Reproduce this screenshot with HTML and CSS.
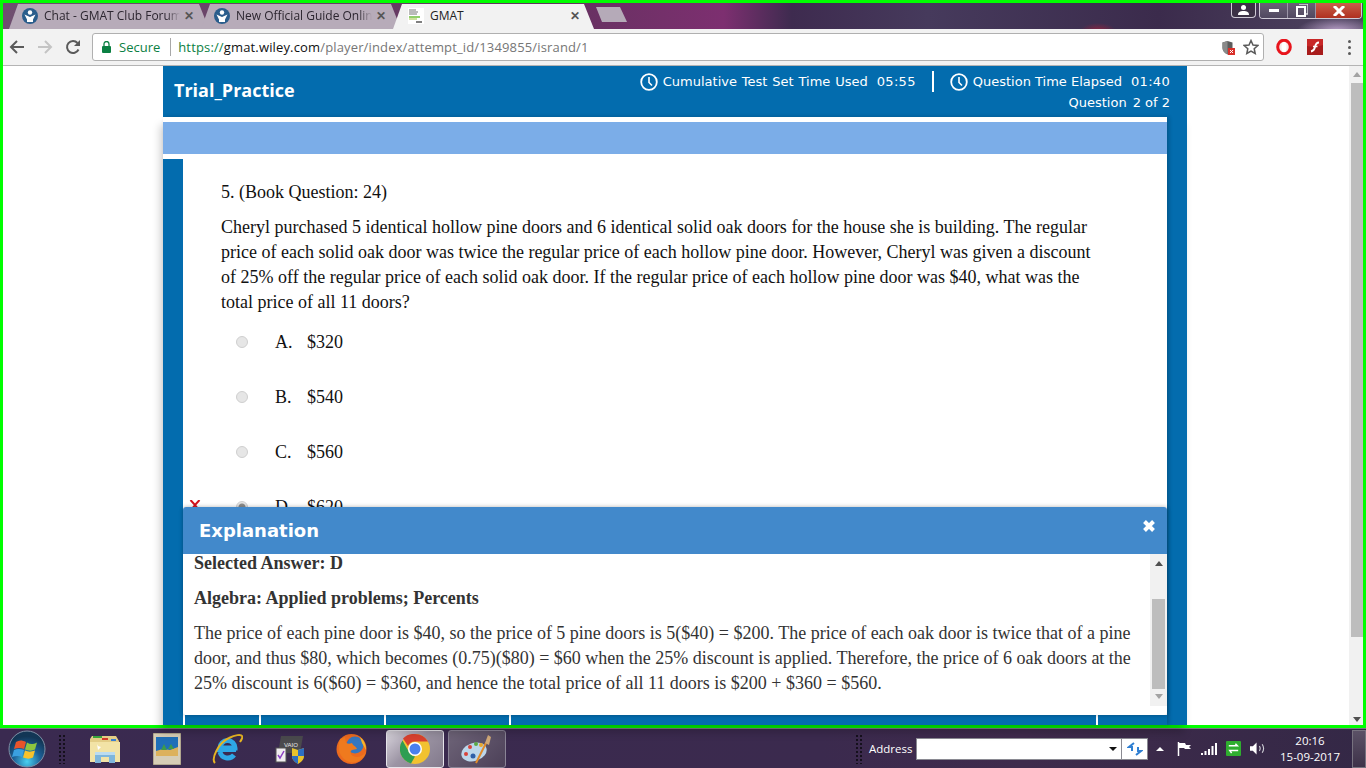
FILE: index.html
```html
<!DOCTYPE html>
<html lang="en">
<head>
  <meta charset="UTF-8">
  <title>GMAT</title>
  <link rel="stylesheet" href="styles.css">
</head>
<body>

  <div class="screen">

    <!-- Tabs -->
    <div class="tabstrip">
      <div class="tab">
        <svg class="fav" viewBox="0 0 16 16"><circle cx="8" cy="8" r="8" fill="#2a5d8c"/><circle cx="8" cy="4.500" r="2.200" fill="#fff"/><path d="M2.500 6.500L8 9l5.500-2.500L11 11.500V14H5v-2.500z" fill="#fff"/></svg>
        <span class="tab-title">Chat - GMAT Club Forum</span>
        <span class="tab-close">✕</span>
      </div>
      <div class="tab">
        <svg class="fav" viewBox="0 0 16 16"><circle cx="8" cy="8" r="8" fill="#2a5d8c"/><circle cx="8" cy="4.500" r="2.200" fill="#fff"/><path d="M2.500 6.500L8 9l5.500-2.500L11 11.500V14H5v-2.500z" fill="#fff"/></svg>
        <span class="tab-title">New Official Guide Online</span>
        <span class="tab-close">✕</span>
      </div>
      <div class="tab tab-active">
        <svg class="fav" viewBox="0 0 16 16"><rect width="16" height="16" fill="#fff"/><path d="M1 2h7M1 4h9M1 6h8" stroke="#777" stroke-width="1"/><path d="M1 9h11" stroke="#6cbf3a" stroke-width="1.500"/><path d="M1 11h8" stroke="#9ac23c"/><path d="M8 14h6" stroke="#555" stroke-width="1.500"/></svg>
        <span class="tab-title">GMAT</span>
        <span class="tab-close">✕</span>
      </div>
      <div class="newtab"></div>
      <div class="winbtns">
        <div class="winbtn win-user"><svg width="11" height="10" viewBox="0 0 11 10"><circle cx="5.500" cy="2.500" r="2.500" fill="#fff"/><path d="M0 10c0-3 2-4 5.500-4s5.500 1 5.500 4z" fill="#fff"/></svg></div>
        <div class="wingroup">
          <div class="winbtn win-min"><span class="min-bar"></span></div>
          <div class="winbtn win-max"><svg width="12" height="13" viewBox="0 0 12 13"><path d="M3 0h9v10H9" fill="none" stroke="#dcdce0" stroke-width="1.500"/><rect x="1" y="3" width="8" height="9" fill="none" stroke="#fff" stroke-width="2"/></svg></div>
          <div class="winbtn win-close"><svg width="14" height="10" viewBox="0 0 14 10"><path d="M2 0l10 10M12 0L2 10" stroke="#fff" stroke-width="3"/></svg></div>
        </div>
      </div>
    </div>

    <!-- Toolbar -->
    <div class="toolbar">
      <svg class="nav-icon nav-back" viewBox="0 0 16 16"><path d="M15 8H2M8 2L2 8l6 6" fill="none" stroke="#5a5a5a" stroke-width="2"/></svg>
      <svg class="nav-icon nav-fwd" viewBox="0 0 16 16"><path d="M1 8h13M8 2l6 6-6 6" fill="none" stroke="#c4c4c4" stroke-width="2"/></svg>
      <svg class="nav-icon nav-reload" viewBox="0 0 16 16"><path d="M13.500 10.500A6 6 0 1 1 12.500 4" fill="none" stroke="#5a5a5a" stroke-width="2"/><path d="M15 1v6H9z" fill="#5a5a5a"/></svg>
      <div class="omnibox">
        <svg class="lock" width="9" height="12" viewBox="0 0 9 12"><rect y="5" width="9" height="7" rx="1" fill="#0b8043"/><path d="M2 5.500V3a2.500 2.500 0 0 1 5 0v2.500" fill="none" stroke="#0b8043" stroke-width="1.300"/></svg>
        <span class="secure">Secure</span>
        <span class="omni-sep"></span>
        <span class="url"><span class="url-https">https://</span><span class="url-host">gmat.wiley.com</span>/player/index/attempt_id/1349855/isrand/1</span>
        <svg class="omni-shield" width="13" height="15" viewBox="0 0 13 15"><path d="M5.500 1l5 1.500V8c0 3-2 5-5 6.500C2.500 13 .5 11 .5 8V2.500z" fill="#5c5c5c"/><path d="M5.500 1v13.500C2.500 13 .5 11 .5 8V2.500z" fill="#8a8a8a"/><rect x="6" y="8" width="7" height="7" fill="#d9302a"/><path d="M8 10l3 3M11 10l-3 3" stroke="#fff"/></svg>
        <svg class="omni-star" width="16" height="16" viewBox="0 0 16 16"><path d="M8 1.500l2 4.500 4.800.5-3.600 3.200 1 4.800L8 12l-4.200 2.500 1-4.800L1.200 6.500 6 6z" fill="none" stroke="#5a5a5a" stroke-width="1.500"/></svg>
      </div>
      <svg class="ext ext-opera" width="16" height="16" viewBox="0 0 16 16"><ellipse cx="8" cy="8" rx="6.300" ry="6.800" fill="#f4e8e8" stroke="#e8141c" stroke-width="3"/><ellipse cx="8" cy="8" rx="2.500" ry="5" fill="#fff"/></svg>
      <svg class="ext ext-flash" width="16" height="16" viewBox="0 0 16 16"><rect width="16" height="16" fill="#a81c1c"/><path d="M0 0h16v6C10 8 5 8 0 7z" fill="#c82828"/><path d="M12 3.500C9 3.500 8.500 5.500 8 8s-1.500 4-4 4.500" fill="none" stroke="#fff" stroke-width="1.800"/><path d="M6 7.500h4.500" stroke="#fff" stroke-width="1.500"/></svg>
      <div class="chrome-menu"><i></i><i></i><i></i></div>
    </div>

    <!-- Page -->
    <div class="viewport">
      <div class="player">
        <header class="player-head">
          <div class="test-name">Trial_Practice</div>
          <div class="timers">
            <div class="timer-row">
              <svg class="clock" viewBox="0 0 18 18"><circle cx="9" cy="9" r="7.800" fill="none" stroke="#fff" stroke-width="1.800"/><path d="M9 4v5.500l3 3" fill="none" stroke="#fff" stroke-width="1.600"/></svg>
              <span class="timer-label timer-label-wide">Cumulative Test Set Time Used</span>
              <span class="timer-value">05:55</span>
              <span class="timer-sep"></span>
              <svg class="clock" viewBox="0 0 18 18"><circle cx="9" cy="9" r="7.800" fill="none" stroke="#fff" stroke-width="1.800"/><path d="M9 4v5.500l3 3" fill="none" stroke="#fff" stroke-width="1.600"/></svg>
              <span class="timer-label">Question Time Elapsed</span>
              <span class="timer-value">01:40</span>
            </div>
            <div class="question-count"><span>Question</span><span>2 of 2</span></div>
          </div>
        </header>

        <div class="player-main">
          <div class="player-sheet">
            <div class="toolbar-band"></div>
            <div class="question-wrap">
              <div class="question">
                <p class="q-text">5. (Book Question: 24)</p>
                <p class="q-text">Cheryl purchased 5 identical hollow pine doors and 6 identical solid oak doors for the house she is building. The regular price of each solid oak door was twice the regular price of each hollow pine door. However, Cheryl was given a discount of 25% off the regular price of each solid oak door. If the regular price of each hollow pine door was $40, what was the total price of all 11 doors?</p>
                <div class="option"><span class="mark"></span><span class="radio"></span><span class="opt-letter">A.</span><span>$320</span></div>
                <div class="option"><span class="mark"></span><span class="radio"></span><span class="opt-letter">B.</span><span>$540</span></div>
                <div class="option"><span class="mark"></span><span class="radio"></span><span class="opt-letter">C.</span><span>$560</span></div>
                <div class="option"><span class="mark"><svg width="12" height="10" viewBox="0 0 12 10"><path d="M1.500 0l4.500 5 4.500-5M6 5L2 10M6 5l4 5" fill="none" stroke="#d3121c" stroke-width="2"/></svg></span><span class="radio radio-on"></span><span class="opt-letter">D.</span><span>$620</span></div>
              </div>
              <div class="footer-tabs"><span class="ft ft1"></span><span class="ft ft2"></span><span class="ft ft3"></span><span class="ft ft4"></span><span class="ft ft5"></span></div>
            </div>
          </div>
        </div>

        <!-- Explanation popup -->
        <section class="modal">
          <div class="modal-head">
            <h2>Explanation</h2>
            <svg width="14" height="14" viewBox="0 0 14 14"><path d="M2.500 2.500l9 9M11.500 2.500l-9 9" stroke="#fff" stroke-width="4"/></svg>
          </div>
          <div class="modal-body">
            <div class="modal-text">
              <p><b>Selected Answer: D</b></p>
              <p><b>Algebra: Applied problems; Percents</b></p>
              <p>The price of each pine door is $40, so the price of 5 pine doors is 5($40) = $200. The price of each oak door is twice that of a pine door, and thus $80, which becomes (0.75)($80) = $60 when the 25% discount is applied. Therefore, the price of 6 oak doors at the 25% discount is 6($60) = $360, and hence the total price of all 11 doors is $200 + $360 = $560.</p>
            </div>
            <div class="modal-scroll">
              <span class="arrow-up"></span>
              <span class="modal-thumb"></span>
              <span class="arrow-down arrow-light"></span>
            </div>
          </div>
        </section>
      </div>

      <div class="page-scroll">
        <span class="arrow-up arrow-light"></span>
        <span class="page-thumb"></span>
        <span class="arrow-down"></span>
      </div>
    </div>
  </div>

  <!-- Windows taskbar -->
  <div class="taskbar">
    <svg class="orb" width="38" height="38" viewBox="0 0 38 38">
      <defs><radialGradient id="orbFill" cx="50%" cy="85%" r="70%"><stop offset="0" stop-color="#4ad0f0"/><stop offset=".55" stop-color="#1c5f96"/><stop offset="1" stop-color="#123655"/></radialGradient></defs>
      <circle cx="19" cy="19" r="18" fill="url(#orbFill)" stroke="#7f8fa5"/>
      <path d="M8 12c3-2 6-2 10 0l-2 7c-3-1.500-6-1.500-10 0z" fill="#e8542a"/>
      <path d="M19 12.500c3 2 6 2 10 0l-2 7c-3 1.500-6 1.500-10 0z" fill="#8ec63f"/>
      <path d="M6 20c3-1.500 6-1.500 10 0l-2 7c-3-1.500-6-1.500-10 0z" fill="#3aa0e0"/>
      <path d="M17 20.500c3 1.500 6 1.500 10 0l-2 7c-3 1.500-6 1.500-10 0z" fill="#f8c22c"/>
    </svg>
    <span class="grip"></span>
    <div class="task-icons">
      <svg width="32" height="30" viewBox="0 0 32 30"><path d="M1 5l2-3h24l3 5v21H1z" fill="#e3cd86"/><path d="M4 2h9v2H4z" fill="#3aa53a"/><path d="M13 4h6v2h-6z" fill="#d23a2a"/><path d="M22 5h5v2h-5z" fill="#3a7fd2"/><path d="M1 8h30v20H1z" fill="#f2e3a6"/><path d="M6 29V18h20v11h-6v-6h-8v6z" fill="#7fb6dc"/><path d="M6 18h20v3H6z" fill="#bcdcf0"/><path d="M8 10l1 6 3-3-3-1z" fill="#fff"/></svg>
      <svg width="28" height="32" viewBox="0 0 28 32"><rect width="28" height="32" fill="#d6cdb6" stroke="#8d8168"/><rect x="3" y="4" width="22" height="19" fill="#1f6fb8"/><path d="M3 18l7-2 7 1 8-3v9H3z" fill="#dcb15c"/><path d="M8 17l3-6 3 6zM15 16l3-5 3 5z" fill="#3f9a4a"/></svg>
      <svg width="31" height="32" viewBox="0 0 31 32"><path d="M8 15a7.500 7.500 0 0 1 15 0H8zM8 19a8 8 0 0 0 14 3" fill="none" stroke="#2ea8e6" stroke-width="5"/><path d="M5 17h19" stroke="#2ea8e6" stroke-width="4"/><path d="M3 30C-1 26 6 10 17 5c6-3 12-4 13-2 1 1 0 3-2 6" fill="none" stroke="#e6b422" stroke-width="2"/></svg>
      <svg width="30" height="32" viewBox="0 0 30 32"><path d="M6 3h22l-3 17H3z" fill="#4a4a4d"/><text x="9" y="14" class="vaio-mark">VAIO</text><rect x="1" y="15" width="10" height="14" fill="#f0edf0" stroke="#555"/><path d="M3 22l2 3 4-7" fill="none" stroke="#8a3fc2" stroke-width="1.500"/><path d="M17 15l6 2 6-2v8c0 4-3 6-6 8-3-2-6-4-6-8z" fill="#e8c22c"/><path d="M23 17v6h6v-8zM17 23h6v8c-3-2-6-4-6-8z" fill="#2c6fc2"/></svg>
      <svg width="31" height="32" viewBox="0 0 31 32"><circle cx="15.500" cy="16" r="15" fill="#ec6a1e"/><circle cx="19" cy="12" r="8.500" fill="#3577c0"/><path d="M4 6c-3 9-1 19 9 23 8 2 15-3 17-10-4 5-9 6-13 4-3-2-3-5-1-6l5-1c-1-3-4-3-5-6-2 1-4 1-6 0L9 4z" fill="#ef7a1e"/><path d="M24 4c4 3 6 8 6 13l-4-7z" fill="#f7b52a"/></svg>
    </div>
    <div class="task-btn task-chrome">
      <svg width="30" height="30" viewBox="0 0 30 30"><circle cx="15" cy="15" r="15" fill="#f2c230"/><path d="M15 0a15 15 0 0 1 13 7.500H15A7.500 7.500 0 0 0 8 12L3 4.500A15 15 0 0 1 15 0z" fill="#d9412f"/><path d="M2.500 6.500L9 18a7.500 7.500 0 0 0 6 4.500L11 29.500A15 15 0 0 1 2.500 6.500z" fill="#2f9e52"/><circle cx="15" cy="15" r="7" fill="#fff"/><circle cx="15" cy="15" r="5.500" fill="#4a80ee"/></svg>
    </div>
    <div class="task-btn task-paint">
      <svg width="32" height="32" viewBox="0 0 32 32"><ellipse cx="13" cy="19" rx="13" ry="9" fill="#bcd6ea" transform="rotate(-18 13 19)"/><circle cx="5" cy="21" r="2" fill="#d8433a"/><circle cx="9" cy="14" r="2" fill="#d8433a"/><circle cx="15" cy="11" r="2" fill="#5aa845"/><circle cx="20" cy="12" r="2" fill="#e8a62c"/><circle cx="12" cy="23" r="2.500" fill="#2f5fa8"/><path d="M15 30L25 10" stroke="#e08a2a" stroke-width="2"/><path d="M24 10l3-8 3 2-2 8z" fill="#d0a878"/></svg>
    </div>
    <span class="grip grip-right"></span>
    <span class="address-label">Address</span>
    <div class="address-box">
      <span class="address-input"><i class="drop"></i></span>
      <span class="address-go"><svg width="16" height="14" viewBox="0 0 16 14"><path d="M7 1L2 5h3v4M9 13l5-4h-3V5" fill="none" stroke="#2f7fd2" stroke-width="2"/></svg></span>
    </div>
    <i class="tray-up"></i>
    <svg class="tray" width="15" height="14" viewBox="0 0 15 14"><path d="M1.500 0v14" stroke="#fff" stroke-width="1.500"/><path d="M2 1h6l1 2h5l-2 2 2 2H8L7 6H2z" fill="#fff"/></svg>
    <svg class="tray" width="16" height="13" viewBox="0 0 16 13"><path d="M0 11h2v2H0zM3.500 9h2v4h-2zM7 7h2v6H7zM10.500 4h2v9h-2zM14 1h2v12h-2z" fill="#fff"/></svg>
    <svg class="tray" width="15" height="15" viewBox="0 0 16 16"><rect width="16" height="16" rx="1" fill="#2fae2f"/><path d="M3 5h9l-2-2M13 10H4l2 3" fill="none" stroke="#fff" stroke-width="1.600"/></svg>
    <svg class="tray" width="15" height="13" viewBox="0 0 16 13"><path d="M0 4h3l4-4v13L3 9H0z" fill="#fff"/><path d="M10 4c1 1.500 1 3.500 0 5M13 2c2 3 2 6 0 9" fill="none" stroke="#cfcfd6" stroke-width="1.200"/></svg>
    <div class="clock-text"><span>20:16</span><span>15-09-2017</span></div>
    <span class="show-desktop"></span>
  </div>

</body>
</html>
```

FILE: styles.css
```css
* {
  box-sizing: border-box;
}

html, body {
  margin: 0;
  padding: 0;
  width: 1366px;
  height: 768px;
  overflow: hidden;
}

body {
  display: flex;
  flex-direction: column;
  background: #3a2a4e;
  font-family: "Open Sans", "Liberation Sans", sans-serif;
}

p {
  margin: 0;
}

.screen {
  height: 728px;
  border: 3px solid #00ff00;
  display: flex;
  flex-direction: column;
  background: #fff;
}

/* Tabs */
.tabstrip {
  height: 26px;
  padding-left: 6px;
  display: flex;
  align-items: flex-end;
  background:
    radial-gradient(ellipse 40px 14px at 1334px 28px, #b9a0c8, transparent),
    radial-gradient(ellipse 18px 8px at 1095px 28px, #8d2440, transparent),
    linear-gradient(90deg, #6f5070 0, #63325f 40%, #7d2f70 53%, #3e2b4f 58%, #463a5c 68%, #3b2b4c 85%, #4f4560 100%);
}

.tab {
  width: 200px;
  height: 25px;
  margin-right: -8px;
  padding: 0 13px 2px 13px;
  display: flex;
  align-items: center;
  font-size: 12px;
  color: #2c2630;
  background: #b7abb9;
  clip-path: polygon(0 100%, 9px 0, calc(100% - 10px) 0, 100% 100%);
}

.tab-active {
  width: 201px;
  background: #f2f2f2;
  padding-left: 15px;
  padding-right: 12px;
  color: #222;
}

.fav {
  width: 16px;
  height: 16px;
  flex: none;
  margin-right: 6px;
}

.tab-title {
  flex: 1;
  white-space: nowrap;
  overflow: hidden;
  -webkit-mask-image: linear-gradient(90deg, #000 90%, transparent);
  mask-image: linear-gradient(90deg, #000 90%, transparent);
}

.tab-active .tab-title {
  -webkit-mask-image: none;
  mask-image: none;
}

.tab-close {
  width: 14px;
  margin-left: 2px;
  font-size: 12px;
  font-weight: 700;
  color: #555;
  text-align: center;
}

.newtab {
  width: 31px;
  height: 15px;
  margin: 0 0 7px 10px;
  align-self: flex-end;
  background: #b5aab8;
  clip-path: polygon(0 0, 24px 0, 100% 100%, 6px 100%);
}

.winbtns {
  margin-left: auto;
  margin-right: 1px;
  align-self: flex-start;
  display: flex;
  gap: 3px;
}

.wingroup {
  display: flex;
  border: 1px solid #cfcad6;
  border-top: 0;
  border-radius: 0 0 4px 4px;
  overflow: hidden;
}

.winbtn {
  height: 15px;
  display: flex;
  align-items: center;
  justify-content: center;
  overflow: hidden;
}

.win-user {
  width: 25px;
  border: 1px solid #cfcad6;
  border-top: 0;
  border-radius: 0 0 4px 4px;
  background: #3c3146;
}

.win-min, .win-max {
  width: 28px;
  background: linear-gradient(#6a6276, #514860);
  border-right: 1px solid #9a94a6;
}

.min-bar {
  width: 10px;
  height: 3px;
  background: #fff;
}

.win-close {
  width: 45px;
  background: linear-gradient(#c8604a, #b03020);
}

/* Toolbar */
.toolbar {
  height: 37px;
  padding: 4px 0 4px 6px;
  display: flex;
  align-items: center;
  background: #f2f2f2;
  border-bottom: 1px solid #b4b4b4;
}

.nav-icon {
  width: 16px;
  height: 16px;
  flex: none;
  margin-right: 12px;
}

.omnibox {
  width: 1172px;
  height: 28px;
  margin-left: -1px;
  padding: 0 4px 0 9px;
  display: flex;
  align-items: center;
  background: #fff;
  border: 1px solid #b0b0b0;
  border-radius: 3px;
  font-size: 13px;
}

.secure {
  margin-left: 8px;
  color: #0b8043;
}

.omni-sep {
  width: 1px;
  height: 18px;
  margin: 0 7px 0 10px;
  background: #a8a8a8;
}

.url {
  color: #767676;
  white-space: nowrap;
  letter-spacing: .15px;
}

.url-https {
  color: #0b8043;
}

.url-host {
  color: #111;
}

.omni-shield {
  margin-left: auto;
}

.omni-star {
  margin-left: 8px;
}

.ext-opera {
  margin-left: 12px;
}

.ext-flash {
  margin-left: 15px;
}

.chrome-menu {
  margin-left: 25px;
  display: flex;
  flex-direction: column;
  gap: 3px;
}

.chrome-menu i {
  width: 3px;
  height: 3px;
  border-radius: 50%;
  background: #5a5a5a;
}

/* Page */
.viewport {
  flex: 1;
  min-height: 0;
  padding-left: 160px;
  display: flex;
  justify-content: space-between;
}

.player {
  position: relative;
  width: 1024px;
  display: flex;
  flex-direction: column;
}

.player-head {
  height: 51px;
  flex: none;
  padding: 5px 17px 0 11px;
  display: flex;
  justify-content: space-between;
  background: #036cae;
  color: #fff;
}

.test-name {
  margin-top: 7px;
  font-family: "Open Sans", sans-serif;
  font-size: 18px;
  font-weight: 700;
  line-height: 25px;
}

.timers {
  font-family: "DejaVu Sans", sans-serif;
  font-size: 13px;
  text-align: right;
}

.timer-row {
  height: 21px;
  display: flex;
  align-items: center;
}

.clock {
  width: 18px;
  height: 18px;
  margin-right: 5px;
}

.timer-label-wide {
  word-spacing: .75px;
}

.timer-value {
  margin-left: 9px;
  letter-spacing: .3px;
}

.timer-sep {
  width: 2px;
  height: 21px;
  margin: 0 16px 0 16px;
  background: #fff;
}

.question-count {
  margin-top: 1px;
  line-height: 20px;
  display: flex;
  justify-content: flex-end;
  gap: 6px;
}

.player-main {
  flex: 1;
  min-height: 0;
  padding-right: 20px;
  background: #036cae;
  box-shadow: -3px 8px 8px rgba(0, 0, 0, .18);
}

.player-sheet {
  height: 100%;
  padding-top: 5px;
  background: #fff;
  display: flex;
  flex-direction: column;
  box-shadow: 2px 0 4px rgba(0, 0, 0, .2);
}

.toolbar-band {
  height: 32px;
  flex: none;
  background: #7badE8;
}

.question-wrap {
  flex: 1;
  min-height: 0;
  margin-top: 5px;
  border-left: 20px solid #036cae;
  display: flex;
  flex-direction: column;
}

.question {
  flex: 1;
  min-height: 0;
  overflow: hidden;
  padding-top: 21px;
  font-family: "Liberation Serif", serif;
  font-size: 18px;
  line-height: 25px;
  color: #111;
}

.q-text {
  width: 917px;
  margin-bottom: 10px;
  padding-left: 38px;
}

.option {
  height: 25px;
  margin-top: 15px;
  margin-bottom: 30px;
  padding-left: 6px;
  display: flex;
  align-items: center;
}

.option + .option {
  margin-top: 0;
}

.mark {
  width: 12px;
  height: 10px;
  margin-right: 35px;
  display: flex;
  align-self: flex-start;
  margin-top: 5px;
}

.radio {
  width: 12px;
  height: 12px;
  margin-top: -1px;
  margin-right: 27px;
  border-radius: 50%;
  background: #e6e6e6;
  border: 1px solid #cfcfcf;
}

.radio-on {
  background: radial-gradient(circle, #8c8c8c 0 3px, #e6e6e6 4px);
}

.opt-letter {
  width: 32px;
}

.footer-tabs {
  height: 10px;
  flex: none;
  display: flex;
  background: #036cae;
}

.ft {
  background: #036cae;
  border-right: 2px solid #fff;
}

.ft1 { width: 2px; background: #fff; border: 0; }
.ft2 { width: 76px; }
.ft3 { width: 125px; }
.ft4 { width: 125px; }
.ft5 { width: 587px; }

/* Explanation popup */
.modal {
  position: absolute;
  left: 20px;
  top: 441px;
  width: 984px;
  height: 208px;
  background: #fff;
  border-radius: 3px;
  overflow: hidden;
  display: flex;
  flex-direction: column;
  box-shadow: 0 0 4px rgba(0, 0, 0, .3);
}

.modal-head {
  height: 47px;
  flex: none;
  padding: 0 11px 0 16px;
  display: flex;
  align-items: center;
  justify-content: space-between;
  background: #4289cb;
}

.modal-head h2 {
  margin: 0;
  font-family: "DejaVu Sans", sans-serif;
  font-size: 18px;
  font-weight: 700;
  color: #fff;
}

.modal-head svg {
  margin-bottom: 9px;
}

.modal-body {
  flex: 1;
  min-height: 0;
  display: flex;
  justify-content: space-between;
}

.modal-text {
  width: 960px;
  margin-top: -3px;
  padding-left: 11px;
  font-family: "Liberation Serif", serif;
  font-size: 18px;
  line-height: 25px;
  color: #333;
}

.modal-text p {
  margin-bottom: 10px;
}

.modal-scroll {
  width: 17px;
  height: 152px;
  padding: 7px 2px 0;
  background: #f1f1f1;
  display: flex;
  flex-direction: column;
  align-items: center;
}

.modal-thumb {
  width: 13px;
  height: 90px;
  margin-top: 33px;
  background: #bdbdbd;
}

.modal-scroll .arrow-down {
  margin-top: 5px;
}

.arrow-up, .arrow-down {
  width: 0;
  height: 0;
  flex: none;
  border-left: 4px solid transparent;
  border-right: 4px solid transparent;
}

.arrow-up {
  border-bottom: 5px solid #505050;
}

.arrow-down {
  border-top: 5px solid #505050;
}

.arrow-light.arrow-up {
  border-bottom-color: #a3a3a3;
}

.arrow-light.arrow-down {
  border-top-color: #a3a3a3;
}

.page-scroll {
  width: 14px;
  padding: 6px 0 3px 2px;
  background: #f1f1f1;
  display: flex;
  flex-direction: column;
  align-items: center;
}

.page-thumb {
  width: 12px;
  height: 554px;
  margin-top: 6px;
  background: #bdbdbd;
}

.page-scroll .arrow-down {
  margin-top: auto;
}

/* Taskbar */
.taskbar {
  flex: 1;
  padding-left: 8px;
  display: flex;
  align-items: center;
  border-top: 1px solid #7b7885;
  background: linear-gradient(90deg, #3a2a50, #3b2a4e 60%, #3f2b4c 75%, #342846);
  color: #fff;
}

.orb {
  flex: none;
}

.grip {
  width: 8px;
  height: 30px;
  flex: none;
  margin-left: 12px;
  background-image: radial-gradient(circle, #15101c 1px, transparent 1.200px);
  background-size: 4px 4px;
}

.task-icons {
  width: 322px;
  flex: none;
  margin-left: 6px;
  padding: 0 27px 0 17px;
  display: flex;
  align-items: center;
  justify-content: space-between;
}

.vaio-mark {
  font-family: "Liberation Sans", sans-serif;
  font-size: 6px;
  fill: #e8e8e8;
}

.task-btn {
  width: 58px;
  height: 38px;
  flex: none;
  display: flex;
  align-items: center;
  justify-content: center;
  border: 1px solid #8a8496;
  border-radius: 3px;
}

.task-chrome {
  margin-left: -8px;
  background: linear-gradient(135deg, #d8d4dc, #9c94a4 45%, #837a8c);
  border-color: #e6e4ea;
}

.task-paint {
  margin-left: 4px;
  background: linear-gradient(135deg, #6e6478, #4c4058);
}

.grip-right {
  margin-left: 349px;
}

.address-label {
  margin-left: 6px;
  width: 47px;
  flex: none;
  font-size: 11.500px;
}

.address-box {
  width: 232px;
  height: 22px;
  flex: none;
  display: flex;
  background: #fff;
  border: 1px solid #8a8a92;
  color: #111;
}

.address-input {
  flex: 1;
  padding-right: 4px;
  display: flex;
  align-items: center;
  justify-content: flex-end;
  border-right: 1px solid #8a8a92;
}

.drop {
  width: 0;
  height: 0;
  border-left: 4px solid transparent;
  border-right: 4px solid transparent;
  border-top: 4px solid #111;
}

.address-go {
  width: 25px;
  display: flex;
  align-items: center;
  justify-content: center;
}

.tray-up {
  width: 0;
  height: 0;
  flex: none;
  margin: 0 4px 0 8px;
  border-left: 4px solid transparent;
  border-right: 4px solid transparent;
  border-bottom: 4px solid #fff;
}

.tray {
  margin-left: 9px;
  flex: none;
}

.clock-text {
  width: 78px;
  flex: none;
  margin-left: 6px;
  display: flex;
  flex-direction: column;
  align-items: center;
  font-size: 11.500px;
  line-height: 16px;
}

.show-desktop {
  width: 14px;
  height: 38px;
  flex: none;
  margin-left: auto;
  border: 1px solid #77727f;
  background: linear-gradient(#5b5166, #3e3249);
}
```
